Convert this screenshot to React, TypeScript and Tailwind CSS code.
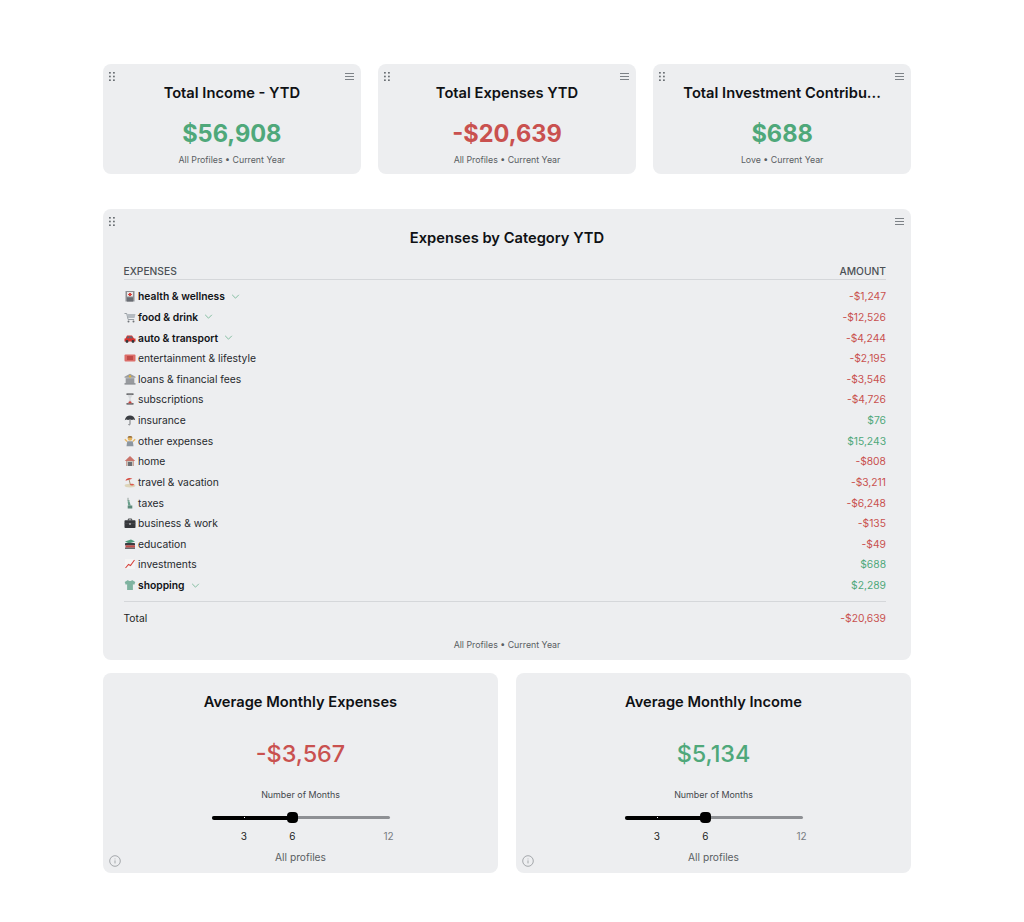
import React from "react";

const GREEN = "text-[#4fa87a]";
const RED = "text-[#c9514f]";

type Row = { icon: string; label: string; amount: string; open?: boolean };

const rows: Row[] = [
  { icon: "hospital", label: "health & wellness", amount: "-$1,247", open: true },
  { icon: "cart", label: "food & drink", amount: "-$12,526", open: true },
  { icon: "car", label: "auto & transport", amount: "-$4,244", open: true },
  { icon: "ticket", label: "entertainment & lifestyle", amount: "-$2,195" },
  { icon: "bank", label: "loans & financial fees", amount: "-$3,546" },
  { icon: "hourglass", label: "subscriptions", amount: "-$4,726" },
  { icon: "umbrella", label: "insurance", amount: "$76" },
  { icon: "shrug", label: "other expenses", amount: "$15,243" },
  { icon: "house", label: "home", amount: "-$808" },
  { icon: "beach", label: "travel & vacation", amount: "-$3,211" },
  { icon: "liberty", label: "taxes", amount: "-$6,248" },
  { icon: "briefcase", label: "business & work", amount: "-$135" },
  { icon: "books", label: "education", amount: "-$49" },
  { icon: "chart", label: "investments", amount: "$688" },
  { icon: "shirt", label: "shopping", amount: "$2,289", open: true },
];

function Emoji({ name }: { name: string }) {
  const shapes: Record<string, React.ReactNode> = {
    hospital: (
      <>
        <rect x="1.5" y="1" width="9" height="10.5" fill="#8d8f94" />
        <rect x="3" y="2" width="6" height="4.5" fill="#e9e5e5" />
        <path d="M5 3h2v1h1v1H7v1H5V5H4V4h1z" fill="#d8433e" />
        <rect x="3" y="7.5" width="6" height="4" fill="#6a6d73" />
      </>
    ),
    cart: (
      <>
        <path d="M0.5 2.5h2.2l1.4 6h6" stroke="#8f959b" strokeWidth="0.9" fill="none" />
        <path d="M3 3h8.5l-1 4H4z" fill="#b4bac0" />
        <circle cx="4.5" cy="10.5" r="1" fill="#6f7378" />
        <circle cx="9.5" cy="10.5" r="1" fill="#6f7378" />
      </>
    ),
    car: (
      <>
        <path d="M3 3.5h5l2 3h1.5v3H.5V6.5h1z" fill="#d8322e" />
        <path d="M3.6 4.3h1.9v2H2.6zM6.2 4.3h1.5l1.2 2H6.2z" fill="#5b6b78" />
        <circle cx="3" cy="9.5" r="1.4" fill="#33363a" />
        <circle cx="9" cy="9.5" r="1.4" fill="#33363a" />
      </>
    ),
    ticket: (
      <>
        <rect x="0.5" y="2.5" width="11" height="7" rx="1" fill="#dc6d69" />
        <rect x="3" y="4" width="6" height="4" fill="#c04b48" />
      </>
    ),
    bank: (
      <>
        <path d="M6 0.8l5.5 3v1H.5v-1z" fill="#9a9ca0" />
        <circle cx="6" cy="3.4" r="1.2" fill="#e2b33a" />
        <rect x="1.5" y="5" width="9" height="5.5" fill="#b5b7bb" />
        <path d="M3 5.5v4.5M5 5.5v4.5M7 5.5v4.5M9 5.5v4.5" stroke="#6d7075" strokeWidth="0.8" />
        <rect x="0.5" y="10.3" width="11" height="1.2" fill="#77797e" />
      </>
    ),
    hourglass: (
      <>
        <rect x="2.5" y="0.5" width="7" height="1.3" fill="#3a3a3d" />
        <rect x="2.5" y="10.2" width="7" height="1.3" fill="#3a3a3d" />
        <path d="M3.4 1.8h5.2L6.5 6l2.1 4.2H3.4L5.5 6z" fill="#d7d9dc" />
        <path d="M4 10.2L6 7.8l2 2.4z" fill="#d3403b" />
      </>
    ),
    umbrella: (
      <>
        <path d="M.8 6.2C1.5 3 3.6 1.6 6 1.6s4.5 1.4 5.2 4.6C10 5.3 9 5.3 8 6c-1-.7-3-.7-4 0-1-.7-2-.7-3.2.2z" fill="#3a3d42" />
        <path d="M6 5.5v4.7c0 1-1.4 1-1.5.1" stroke="#55585d" strokeWidth="0.8" fill="none" />
      </>
    ),
    shrug: (
      <>
        <circle cx="6" cy="3.4" r="2.3" fill="#e6b45c" />
        <path d="M3.4 2.4C4 .9 8 .9 8.6 2.4z" fill="#7d5a35" />
        <path d="M3.2 6.3h5.6l.7 5h-7z" fill="#8c96a0" />
        <path d="M3.2 6.5L.8 4.2M8.8 6.5l2.4-2.3" stroke="#e6b45c" strokeWidth="1.2" />
      </>
    ),
    house: (
      <>
        <path d="M6 1L.8 6h1.4v5h7.6V6h1.4z" fill="#c9736a" />
        <rect x="2.6" y="6" width="6.8" height="5" fill="#c5c2ba" />
        <rect x="4" y="7" width="4" height="4" fill="#6a6e73" />
      </>
    ),
    beach: (
      <>
        <ellipse cx="6" cy="9.6" rx="5.4" ry="1.9" fill="#ded5ba" />
        <path d="M1.5 4.7C2.3 2 5.5 1 8.4 2.8z" fill="#d9483f" />
        <path d="M5 3.4L6.5 9" stroke="#8b6b3c" strokeWidth="0.7" />
        <ellipse cx="8" cy="8.6" rx="2" ry="0.9" fill="#dd5a4f" />
      </>
    ),
    liberty: (
      <>
        <path d="M4 .8v3" stroke="#7d8d86" strokeWidth="0.8" />
        <circle cx="4.6" cy="4" r="1.1" fill="#76a593" />
        <path d="M3.7 5.1h2l1 3.4H4.2z" fill="#6ba08d" />
        <path d="M3.7 8.5h4.6v3H3.7z" fill="#5c8a7a" />
      </>
    ),
    briefcase: (
      <>
        <path d="M4.3 3.5V2h3.4v1.5" stroke="#333539" strokeWidth="0.9" fill="none" />
        <rect x="0.5" y="3.3" width="11" height="7.7" rx="0.8" fill="#35373b" />
        <rect x="5" y="6" width="2" height="1.6" fill="#c7c8ca" />
        <path d="M.5 6.6h11" stroke="#55575b" strokeWidth="0.5" />
      </>
    ),
    books: (
      <>
        <path d="M1 3.5L7 1.5l4 2-6 2z" fill="#4d9a7c" />
        <rect x="1" y="5" width="10" height="2.4" rx="0.4" fill="#3a3d42" />
        <rect x="1.5" y="7.4" width="9.5" height="2.2" fill="#c54d49" />
        <rect x="1" y="9.6" width="10" height="1.2" fill="#4a4d52" />
      </>
    ),
    chart: (
      <>
        <rect x="1" y="1" width="10" height="10" fill="#f4f4f4" />
        <path d="M1.5 10l3-3.5 2 1L10.5 2" stroke="#d6423c" strokeWidth="1.1" fill="none" />
      </>
    ),
    shirt: (
      <path d="M4 1L.7 3l1 2.8 1.4-.6V11h5.8V5.2l1.4.6 1-2.8L8 1C7.5 2.4 4.5 2.4 4 1z" fill="#7fb3a0" />
    ),
  };
  return (
    <svg viewBox="0 0 12 12" className="w-3 h-3 shrink-0">
      {shapes[name]}
    </svg>
  );
}

function Grip() {
  return (
    <svg viewBox="0 0 6 9" className="w-[6px] h-[9px]">
      {[0.8, 4.5, 8.2].map((y) => (
        <g key={y}>
          <rect x="0" y={y - 0.8} width="1.8" height="1.6" fill="#6b7075" />
          <rect x="4" y={y - 0.8} width="1.8" height="1.6" fill="#6b7075" />
        </g>
      ))}
    </svg>
  );
}

function Menu() {
  return (
    <svg viewBox="0 0 9 7" className="w-[9px] h-[7px]">
      <path d="M0 .5h9M0 3.5h9M0 6.5h9" stroke="#70757a" strokeWidth="0.9" />
    </svg>
  );
}

function CardControls() {
  return (
    <div className="flex justify-between items-center h-[16px] pl-[6px] pr-[7px] pt-[8px]">
      <Grip />
      <Menu />
    </div>
  );
}

function StatCard({ title, value, color, sub }: { title: string; value: string; color: string; sub: string }) {
  return (
    <div className="bg-[#edeef0] rounded-lg h-[110px] flex flex-col">
      <CardControls />
      <h3 className="text-center text-[14.7px] leading-5 font-semibold text-[#0f1114] mt-[3px] px-4 truncate">{title}</h3>
      <div className={`text-center text-[23.6px] leading-8 font-bold mt-[15px] ${color}`}>{value}</div>
      <div className="text-center text-[8.8px] leading-3 text-[#5a5e63] mt-[3.5px]">{sub}</div>
    </div>
  );
}

function ExpenseRow({ row }: { row: Row }) {
  const positive = !row.amount.startsWith("-");
  return (
    <div className="flex justify-between items-center h-[20.64px] text-[10.3px] leading-[14px]">
      <div className="flex items-center">
        <Emoji name={row.icon} />
        <span className={row.open ? "ml-[2.5px] font-semibold text-[#111317]" : "ml-[2.5px] text-[#26292d]"}>{row.label}</span>
        {row.open && (
          <svg viewBox="0 0 10 6" className="w-[9px] h-[5px] ml-[6px]">
            <path d="M1 1l4 4 4-4" fill="none" stroke="#6fb592" strokeWidth="1" />
          </svg>
        )}
      </div>
      <span className={positive ? GREEN : RED}>{row.amount}</span>
    </div>
  );
}

function AverageCard({ title, value, color }: { title: string; value: string; color: string }) {
  const marks = [3, 6, 12];
  const pct = (v: number) => ((v - 1) / 11) * 100;
  return (
    <div className="relative bg-[#edeef0] rounded-lg h-[200px] flex flex-col items-center pt-[18.5px]">
      <h3 className="text-[14.7px] leading-5 font-semibold text-[#0f1114]">{title}</h3>
      <div className={`text-[23.4px] leading-8 font-medium mt-[26.5px] ${color}`}>{value}</div>
      <div className="text-[8.9px] leading-3 text-[#44484d] mt-[19px]">Number of Months</div>
      <div className="relative w-[178px] h-[32px] mt-[10px]">
        <div className="absolute left-0 right-0 top-[5.2px] h-[3px] rounded-full bg-[#8e9094]" />
        <div className="absolute left-0 top-[4.7px] h-[4px] rounded-l-full bg-black" style={{ width: `${pct(6)}%` }} />
        <div className="absolute top-[1.2px] w-[11px] h-[11px] -ml-[5.5px] rounded-[4px] bg-black" style={{ left: `${pct(6)}%` }} />
        <div className="absolute top-[6px] w-[1px] h-[1px] bg-white" style={{ left: `${pct(3)}%` }} />
        {marks.map((m) => (
          <span
            key={m}
            className={`absolute top-[19px] -translate-x-1/2 text-[10px] leading-3 ${m === 12 ? "text-[#777b80] -ml-[1px]" : "text-[#1c1e22]"}`}
            style={{ left: `${pct(m)}%` }}
          >
            {m}
          </span>
        ))}
      </div>
      <div className="text-[10.2px] leading-3 text-[#5a5e63] mt-[7.5px]">All profiles</div>
      <svg viewBox="0 0 12 12" className="absolute left-[6px] bottom-[6px] w-3 h-3">
        <circle cx="6" cy="6" r="5.3" fill="none" stroke="#85898e" strokeWidth="0.7" />
        <path d="M6 5.4v3M6 3.6v.7" stroke="#85898e" strokeWidth="0.7" />
      </svg>
    </div>
  );
}

export default function App() {
  return (
    <div className="w-[1024px] h-[922px] bg-white px-[103px] pt-[64px] font-['Inter',sans-serif]">
      <div className="w-[808px]">
        <div className="grid grid-cols-3 gap-[17.5px]">
          <StatCard title="Total Income - YTD" value="$56,908" color={GREEN} sub="All Profiles • Current Year" />
          <StatCard title="Total Expenses YTD" value="-$20,639" color={RED} sub="All Profiles • Current Year" />
          <StatCard title="Total Investment Contribu..." value="$688" color={GREEN} sub="Love • Current Year" />
        </div>

        <div className="bg-[#edeef0] rounded-lg h-[451px] mt-[35px] flex flex-col">
          <CardControls />
          <h3 className="text-center text-[14.7px] leading-5 font-semibold text-[#0f1114] mt-[3px]">Expenses by Category YTD</h3>
          <div className="pl-[20.5px] pr-[25px] mt-[15.5px]">
            <div className="flex justify-between text-[10.25px] font-medium text-[#4c5055] h-[16.5px] border-b border-[#d5d7da] leading-[15px]">
              <span>EXPENSES</span>
              <span>AMOUNT</span>
            </div>
            <div className="mt-[6px]">
              {rows.map((r) => (
                <ExpenseRow key={r.label} row={r} />
              ))}
            </div>
            <div className="border-t border-[#d5d7da] mt-[6px] flex justify-between items-center h-[33px] text-[10.3px]">
              <span className="text-[#1c1e22]">Total</span>
              <span className={RED}>-$20,639</span>
            </div>
          </div>
          <div className="text-center text-[8.8px] leading-3 text-[#5a5e63] mt-[4.5px]">All Profiles • Current Year</div>
        </div>

        <div className="grid grid-cols-2 gap-[18px] mt-[13px]">
          <AverageCard title="Average Monthly Expenses" value="-$3,567" color={RED} />
          <AverageCard title="Average Monthly Income" value="$5,134" color={GREEN} />
        </div>
      </div>
    </div>
  );
}
